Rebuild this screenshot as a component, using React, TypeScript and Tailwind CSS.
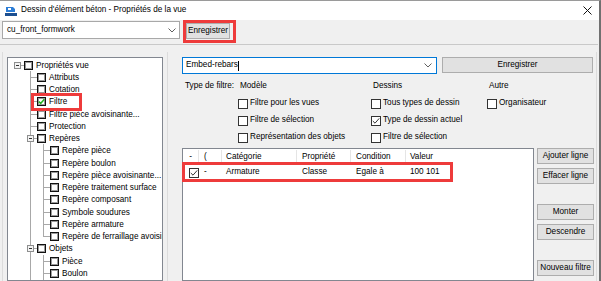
import React from 'react';

type TreeItem = {
  label: string;
  level: number;
  last?: boolean;
  expander?: boolean;
  checked?: boolean;
};

const treeItems: TreeItem[] = [
  { label: 'Propriétés vue', level: 0, expander: true, last: true },
  { label: 'Attributs', level: 1 },
  { label: 'Cotation', level: 1 },
  { label: 'Filtre', level: 1, checked: true },
  { label: 'Filtre pièce avoisinante...', level: 1 },
  { label: 'Protection', level: 1 },
  { label: 'Repères', level: 1, expander: true },
  { label: 'Repère pièce', level: 2 },
  { label: 'Repère boulon', level: 2 },
  { label: 'Repère pièce avoisinante...', level: 2 },
  { label: 'Repère traitement surface', level: 2 },
  { label: 'Repère composant', level: 2 },
  { label: 'Symbole soudures', level: 2 },
  { label: 'Repère armature', level: 2 },
  { label: 'Repère de ferraillage avoisinante', level: 2, last: true },
  { label: 'Objets', level: 1, expander: true },
  { label: 'Pièce', level: 2 },
  { label: 'Boulon', level: 2 },
  // next row only shows its tree lines at the bottom edge
  { label: '', level: 2 },
];

const LINE = '#a8a8a8';

function Guide({ h, up, down, branch, expander }: { h: number; up?: boolean; down?: boolean; branch?: boolean; expander?: boolean }) {
  return (
    <svg width="13" height={h} className="shrink-0 block" shapeRendering="crispEdges">
      {up && <line x1="6.5" y1="0" x2="6.5" y2="6.5" stroke={LINE} />}
      {down && <line x1="6.5" y1="6.5" x2="6.5" y2={h} stroke={LINE} />}
      {branch && <line x1="6.5" y1="6.5" x2="13" y2="6.5" stroke={LINE} />}
      {expander && (
        <>
          <rect x="3.5" y="3.5" width="6" height="6" fill="#f4f4f4" stroke="#8e8f8f" />
          <line x1="5" y1="6.5" x2="8" y2="6.5" stroke="#333" />
        </>
      )}
    </svg>
  );
}

function TreeCheck({ checked }: { checked?: boolean }) {
  return (
    <div className="w-[9px] h-[9px] mt-[2px] shrink-0 bg-white border border-[#111] shadow-[inset_0_0_0_1px_#9a9a9a] flex items-center justify-center">
      {checked && (
        <svg width="7" height="7" viewBox="0 0 7 7">
          <path d="M0.8 3.6 L2.7 5.4 L6.3 1.2" fill="none" stroke="#22b522" strokeWidth="1.6" />
        </svg>
      )}
    </div>
  );
}

function Tree() {
  const open: boolean[] = [];
  return (
    <div className="flex-1 bg-white border border-[#828790] relative overflow-hidden pt-px pl-[3px] whitespace-nowrap">
      {treeItems.map((item, i) => {
        const h = i % 4 === 3 ? 13 : 12;
        const cells: React.ReactNode[] = [];
        for (let k = 0; k < item.level; k++) {
          if (k === 0) cells.push(<Guide key={k} h={h} />);
          else cells.push(<Guide key={k} h={h} up={open[k]} down={open[k]} />);
        }
        if (item.level === 0) {
          cells.push(<Guide key="own" h={h} branch expander />);
        } else {
          cells.push(<Guide key="own" h={h} up down={!item.last} branch expander={item.expander} />);
        }
        open[item.level] = !item.last;
        return (
          <div key={i} className={`flex items-start ${i % 4 === 3 ? 'h-[13px]' : 'h-[12px]'}`}>
            {cells}
            <TreeCheck checked={item.checked} />
            {item.label && <span className="ml-[3px] leading-[13px]">{item.label}</span>}
          </div>
        );
      })}
      <div className="absolute left-[23px] top-[35px] w-[51px] h-[18px] border-[3px] border-[#ee3b3b]" />
    </div>
  );
}

function Btn({ children, className = '' }: { children: React.ReactNode; className?: string }) {
  return (
    <div className={`h-[16px] bg-[#e1e1e1] border border-[#adadad] flex items-center justify-center ${className}`}>
      {children}
    </div>
  );
}

function Check({ checked }: { checked?: boolean }) {
  return (
    <div className="w-[10px] h-[10px] bg-white border border-[#333] shrink-0 flex items-center justify-center">
      {checked && (
        <svg width="8" height="8" viewBox="0 0 8 8">
          <path d="M0.8 4 L3 6.2 L7.2 1.4" fill="none" stroke="#333" strokeWidth="1" />
        </svg>
      )}
    </div>
  );
}

function Opt({ label, checked }: { label: string; checked?: boolean }) {
  return (
    <div className="flex items-center">
      <Check checked={checked} />
      <span className="ml-[2px]">{label}</span>
    </div>
  );
}

function Chevron() {
  return (
    <svg width="8" height="5" viewBox="0 0 8 5">
      <path d="M0.5 0.5 L4 4 L7.5 0.5" fill="none" stroke="#606060" strokeWidth="1" />
    </svg>
  );
}

export default function App() {
  return (
    <div className="w-[601px] h-[281px] overflow-hidden bg-[#f0f0f0] text-[8.2px] leading-none text-black font-['Liberation_Sans',Arial,sans-serif] border-t border-[#9a9a9a] border-r-2 border-r-[#707070] flex flex-col">
      {/* title bar */}
      <div className="h-[19px] shrink-0 bg-white flex items-center pl-[5px] pr-[7px]">
        <svg width="12" height="10" viewBox="0 0 12 10">
          <path d="M1 1 H8 L10 3 V6 H1 Z" fill="#2c7dd6" />
          <rect x="3" y="2" width="3" height="2" fill="#ffffff" />
          <rect x="0" y="7" width="12" height="3" fill="#1c4f91" />
        </svg>
        <span className="ml-[4px]">Dessin d'élément béton - Propriétés de la vue</span>
        <svg width="9" height="9" viewBox="0 0 9 9" className="ml-auto">
          <path d="M0.5 0.5 L8.5 8.5 M8.5 0.5 L0.5 8.5" stroke="#111" strokeWidth="1" />
        </svg>
      </div>

      {/* toolbar */}
      <div className="h-[24px] shrink-0 flex items-start pl-[2px]">
        <div className="mt-px w-[178px] h-[18px] bg-white border border-[#a8a8a8] flex items-center pl-[4px] pr-[3px]">
          <span>cu_front_formwork</span>
          <span className="ml-auto"><Chevron /></span>
        </div>
        <div className="ml-[3px] w-[53px] h-[23px] border-[3px] border-[#ee3b3b]">
          <Btn className="w-[44px]">Enregistrer</Btn>
        </div>
      </div>
      <div className="h-px shrink-0 bg-[#c9c9c9] mr-px" />

      {/* body */}
      <div className="flex flex-1 min-h-0 pt-[7px]">
        <div className="ml-[2px] w-[166px] border-l border-r border-[#dcdcdc] px-[4px] pt-[5px] flex flex-col">
          <Tree />
        </div>

        <div className="ml-[4px] w-[425px] border-r border-[#dcdcdc] pl-[10px] pt-[5px] flex flex-col">
          <div className="flex items-start gap-[5px]">
            <div className="w-[255px] h-[17px] bg-white border border-[#0078d7] flex items-center pl-[3px] pr-[4px]">
              <span>Embed-rebars</span>
              <span className="w-px h-[10px] bg-black" />
              <span className="ml-auto"><Chevron /></span>
            </div>
            <Btn className="w-[151px]">Enregistrer</Btn>
          </div>

          <div className="mt-[4px] grid grid-cols-[56px_133px_116px_1fr] auto-rows-[17px] items-center">
            <span className="pl-[3px]">Type de filtre:</span>
            <span className="pl-[2px]">Modèle</span>
            <span className="pl-[2px]">Dessins</span>
            <span className="pl-[2px]">Autre</span>

            <span />
            <Opt label="Filtre pour les vues" />
            <Opt label="Tous types de dessin" />
            <Opt label="Organisateur" />

            <span />
            <Opt label="Filtre de sélection" />
            <Opt label="Type de dessin actuel" checked />
            <span />

            <span />
            <Opt label="Représentation des objets" />
            <Opt label="Filtre de sélection" />
            <span />
          </div>

          <div className="mt-[2px] flex flex-1 gap-[3px] min-h-0">
            <div className="w-[352px] bg-white border border-[#828790] relative">
              <div className="grid grid-cols-[16px_23px_75px_54px_55px_1fr] h-[16px] items-center">
                <span className="h-[14px] border-r border-[#e5e5e5] flex items-center justify-center">-</span>
                <span className="h-[14px] border-r border-[#e5e5e5] flex items-center pl-[5px]">(</span>
                <span className="h-[14px] border-r border-[#e5e5e5] flex items-center pl-[4px]">Catégorie</span>
                <span className="h-[14px] border-r border-[#e5e5e5] flex items-center pl-[5px]">Propriété</span>
                <span className="h-[14px] border-r border-[#e5e5e5] flex items-center pl-[5px]">Condition</span>
                <span className="h-[14px] flex items-center pl-[4px]">Valeur</span>
              </div>
              <div className="grid grid-cols-[16px_23px_75px_54px_55px_1fr] h-[15px] items-center">
                <span className="flex justify-end"><Check checked /></span>
                <span className="pl-[5px]">-</span>
                <span className="pl-[4px]">Armature</span>
                <span className="pl-[5px]">Classe</span>
                <span className="pl-[5px]">Egale à</span>
                <span className="pl-[4px]">100 101</span>
              </div>
              <div className="absolute left-[-1px] top-[13px] w-[271px] h-[20px] border-[3px] border-[#ee3b3b]" />
            </div>

            <div className="w-[57px] flex flex-col">
              <Btn>Ajouter ligne</Btn>
              <Btn className="mt-[4px]">Effacer ligne</Btn>
              <Btn className="mt-[20px]">Monter</Btn>
              <Btn className="mt-[4px]">Descendre</Btn>
              <Btn className="mt-[20px]">Nouveau filtre</Btn>
            </div>
          </div>
        </div>
      </div>
    </div>
  );
}
